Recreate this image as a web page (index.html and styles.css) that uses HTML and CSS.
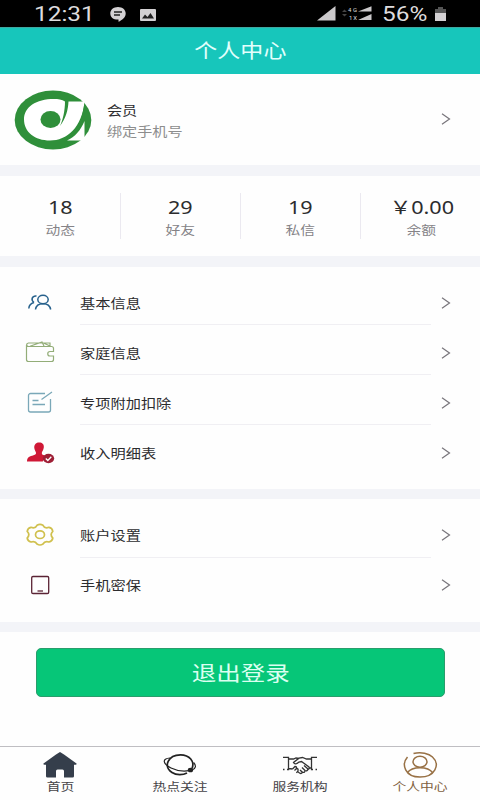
FILE: index.html
```html
<!DOCTYPE html>
<html lang="zh-CN">
<head>
<meta charset="utf-8">
<meta name="viewport" content="width=device-width">
<title>个人中心</title>
<link rel="stylesheet" href="styles.css">
</head>
<body>
<div class="app">
  <div class="status">
    <span class="clock wide">12:31</span>
    <svg class="chat" width="16" height="15" viewBox="0 0 16 15"><path d="M8 0c4.500 0 7.700 2.800 7.700 6.400 0 4-3.700 6.500-7.200 8.400v-2.200C3.500 12.900.3 10.100.3 6.400.3 2.800 3.500 0 8 0z" fill="#d3d1d3"/><path d="M4 5h8M4 8h6" stroke="#222" stroke-width="1.300"/></svg>
    <svg class="photo" width="16" height="12" viewBox="0 0 16 12"><rect width="16" height="12" rx="1" fill="#d3d1d3"/><path d="M2 9.500l3-4 2.500 2.500L10.500 4 14 9.500z" fill="#222"/></svg>
    <svg class="signal" width="56" height="15" viewBox="0 0 56 15"><path d="M0 14.500L18.500 0v14.500zM41 5.500L54.500.2v5.300zM41 14L54.500 8v6z" fill="#cbc9cb"/><path d="M25 6l2.500-2.500L30 6zM25 8l2.500 2.500L30 8z" fill="#444"/><text x="31" y="6" textLength="9">4G</text><text x="32" y="14" textLength="8">1X</text></svg>
    <span class="percent wide">56%</span>
    <svg class="battery" width="11" height="14" viewBox="0 0 11 14"><path d="M3 0h5v2h3v5H0V2h3z" fill="#555"/><path d="M0 6h11v8H0z" fill="#d3d1d3"/></svg>
  </div>
  <header class="title"><span class="wide">个人中心</span></header>

  <section class="profile">
    <svg class="avatar" width="78" height="60" viewBox="0 0 78 60"><ellipse cx="39" cy="30" rx="38.300" ry="29.500" fill="#2f8f3a"/><path d="M51 11.500C48 9.500 44 9 40 9 22 9 10 17 10 29.500S21 50.500 36 50.500c17 0 32-13 34.500-39H54.500C54 20 52 28 46 36 49 30 51 20 51 11.500z" fill="#fff"/><ellipse cx="36.500" cy="29.500" rx="10" ry="8.500" fill="#2f8f3a"/><path d="M70.500 31v19.500H53C61 47 67 40 70.500 31z" fill="#fff"/><path d="M70.500 12v17C67 38 61 45.500 53 49.500 63 41 69 28 70.500 12z" fill="#2f8f3a"/></svg>
    <div class="who">
      <span class="name"><span class="wide">会员</span></span>
      <span class="phone"><span class="wide">绑定手机号</span></span>
    </div>
    <svg class="arrow" width="10" height="12" viewBox="0 0 10 12"><path d="M1 .8L8.500 6 1 11.200"/></svg>
  </section>

  <section class="stats">
    <div class="stat"><b class="wide">18</b><span class="wide">动态</span></div>
    <div class="stat"><b class="wide">29</b><span class="wide">好友</span></div>
    <div class="stat"><b class="wide">19</b><span class="wide">私信</span></div>
    <div class="stat"><b class="wide">￥0.00</b><span class="wide">余额</span></div>
  </section>

  <section class="menu">
    <div class="row">
      <svg class="icon" width="30" height="26" viewBox="0 0 30 26" fill="none" stroke="#27618c" stroke-width="1.500"><ellipse cx="18" cy="9.500" rx="5.200" ry="4.300"/><path d="M10.500 19.500c.5-4 3.300-5.800 7.500-5.800s7 1.800 7.700 5.800M11.500 6C7 5.500 5.500 10 9 12.500M3.800 18.500c.2-3.500 1.700-5 5.200-6"/></svg>
      <div class="line"><span class="wide">基本信息</span><svg class="arrow" width="10" height="12" viewBox="0 0 10 12"><path d="M1 .8L8.500 6 1 11.200"/></svg></div>
    </div>
    <div class="row">
      <svg class="icon" width="30" height="26" viewBox="0 0 30 26" fill="none" stroke="#93ad78" stroke-width="1.200"><path d="M1.500 5v14.500a2 2 0 0 0 2 2h23a2 2 0 0 0 2-2v-3.500H25a2.200 2.200 0 0 1 0-4.500h3.500V8a2 2 0 0 0-2-1.500h-23C1 6.500 1 3.300 3.500 3H25v3M5 6.300L17 2l2 4M19 3.300l6 2.700"/></svg>
      <div class="line"><span class="wide">家庭信息</span><svg class="arrow" width="10" height="12" viewBox="0 0 10 12"><path d="M1 .8L8.500 6 1 11.200"/></svg></div>
    </div>
    <div class="row">
      <svg class="icon" width="30" height="26" viewBox="0 0 30 26" fill="none" stroke="#7aa8b8" stroke-width="1.300"><path d="M20 3.500H5.500a2 2 0 0 0-2 2v14.500a2 2 0 0 0 2 2h18a2 2 0 0 0 2-2V9M27 2L16.500 9.500M7.500 10.500h6M7.500 14.500H20"/></svg>
      <div class="line"><span class="wide">专项附加扣除</span><svg class="arrow" width="10" height="12" viewBox="0 0 10 12"><path d="M1 .8L8.500 6 1 11.200"/></svg></div>
    </div>
    <div class="row">
      <svg class="icon" width="30" height="26" viewBox="0 0 30 26"><path d="M14 2.500c3.500 0 5.200 2 4.800 5-.3 2.500-1.800 4-2 5.500 0 1.500 1 2 3 2.500l-2 6H2c0-5 3-5 6.500-6.300 2-.7 2.700-1.200 2.500-2.500C10.500 11 9.500 10 9.300 8 9 5 10.500 2.500 14 2.500z" fill="#cf1836"/><ellipse cx="23.500" cy="18.500" rx="5.700" ry="4.700" fill="#9e1f36"/><path d="M20.800 18.500l2 2 3.500-3.700" fill="none" stroke="#fff" stroke-width="1.300"/></svg>
      <div class="line"><span class="wide">收入明细表</span><svg class="arrow" width="10" height="12" viewBox="0 0 10 12"><path d="M1 .8L8.500 6 1 11.200"/></svg></div>
    </div>
  </section>

  <section class="menu short">
    <div class="row">
      <svg class="icon" width="30" height="26" viewBox="0 0 30 26" fill="none" stroke="#d0c04e" stroke-width="1.700"><path d="M12 3.300Q15 1.500 18 3.300C19.300 6 21 6.500 24 5.300Q27.300 6 27.800 9.300C25.500 11.500 25.500 13.500 27.800 16Q27.300 19.300 24 20C21 19 19.300 19.500 18 22Q15 24 12 22C10.700 19.500 9 19 6 20Q2.700 19.300 2.200 16C4.500 13.500 4.500 11.500 2.200 9.300Q2.700 6 6 5.300C9 6.500 10.700 6 12 3.300z"/><ellipse cx="15" cy="12.700" rx="4.500" ry="3.800"/></svg>
      <div class="line"><span class="wide">账户设置</span><svg class="arrow" width="10" height="12" viewBox="0 0 10 12"><path d="M1 .8L8.500 6 1 11.200"/></svg></div>
    </div>
    <div class="row">
      <svg class="icon" width="30" height="26" viewBox="0 0 30 26" fill="none"><rect x="6.700" y="4.500" width="17" height="17" rx="1.300" stroke="#5b2435" stroke-width="1.300"/><path d="M12.500 19h5.500" stroke="#5b2435" stroke-width="1.300"/></svg>
      <div class="line"><span class="wide">手机密保</span><svg class="arrow" width="10" height="12" viewBox="0 0 10 12"><path d="M1 .8L8.500 6 1 11.200"/></svg></div>
    </div>
  </section>

  <main class="action"><button class="logout"><span class="wide">退出登录</span></button></main>

  <nav class="tabs">
    <div class="tab">
      <svg width="36" height="28" viewBox="0 0 36 28"><path d="M18 1l4 2.500L34.500 12.500q.5 1.200-1 1.200H32v11.500q0 1.300-1.500 1.300H22V20q0-1.500-1.500-1.500h-5Q14 18.500 14 20v6.500H5.500Q4 26.500 4 25.200V13.700H2.500q-1.500 0-1-1.200L14 3.500z" fill="#353e4b"/></svg>
      <span class="wide">首页</span>
    </div>
    <div class="tab">
      <svg width="36" height="28" viewBox="0 0 36 28" fill="none" stroke="#222" stroke-width="1.700"><path d="M30 17.500C33 10.500 27.500 3.800 18.500 3.800 6 3.800 1 15.500 10 21.500c4.500 3 11 2.700 15 .5"/><path d="M8 7C-.5 7.500 1 13 9 17c6 3 12 3.500 18 2.700M31.500 11.500c3 3 2.500 6-1.500 7.500" stroke-width="1.200"/><ellipse cx="28.500" cy="19" rx="2.700" ry="2.300" fill="#222" stroke="none"/></svg>
      <span class="wide">热点关注</span>
    </div>
    <div class="tab">
      <svg width="36" height="28" viewBox="0 0 36 28" fill="none" stroke="#333" stroke-width="1.300"><path d="M1 6.300h5.500v12.200H5M1 18.500h1.500M35 6.300h-5.500v12.200H31M33.500 18.500H35M6.500 8h5l2.500-1 3 .5M6.500 17.500l4 .5M29.500 8h-5l-4-1.500-3.500.7-5.500 4.300q1.500 3 5.500-.5l2.500-.5 7.500 5.500q1 2-1.500 2.500M29.500 17h-3M22 14.500l4 3.500q-.5 2.500-3 1.500l-3-3M23 19.500q0 2.500-2.500 1.800L18 19M20.500 21.300q-1 2-3 .7L15 20M10.500 18l2.500-2.500q2 0 1.500 2l-2 2M14.500 17.500q2 0 1.500 2l-1.500 2.500"/></svg>
      <span class="wide">服务机构</span>
    </div>
    <div class="tab active">
      <svg width="36" height="28" viewBox="0 0 36 28" fill="none" stroke="#987145" stroke-width="1.500"><path d="M5.500 6C-1 13.500 3 26 18 26s20.500-12.500 12.500-20C27 2.500 19 .5 11.500 2.500"/><ellipse cx="18" cy="10.700" rx="7" ry="5.500"/><path d="M5.500 21.500C10 15 26 15 30.500 21.500"/></svg>
      <span class="wide">个人中心</span>
    </div>
  </nav>
</div>
</body>
</html>
```
FILE: styles.css
```css
* { box-sizing: border-box; }
body {
  margin: 0;
  font-family: "Noto Sans", "Noto Sans CJK SC", sans-serif;
  color: #2c2c2e;
  background: #f3f4f8;
}
.app { width: 480px; height: 800px; display: flex; flex-direction: column; overflow: hidden; }
.wide { display: inline-block; white-space: nowrap; transform: scaleX(1.2); }
svg { display: block; flex: none; }

.status {
  height: 27px; flex: none; background: #000; color: #dedcde;
  display: flex; align-items: center; padding-left: 34px;
  font: 20px/27px Roboto, sans-serif;
}
.status .wide { transform: scaleX(1.22); transform-origin: left; }
.clock { width: 76px; padding-top: 2px; }
.percent { width: 53px; padding-top: 2px; }
.chat { margin-top: 2px; }
.photo { margin: 2px 161px 0 14px; }
.signal { margin: 0 9px 0 0; }
.signal text { font: 6px Roboto, sans-serif; fill: #ddd; }

.title {
  height: 47px; flex: none; background: #17c6bb; color: #e2fffc;
  border-top: 1px solid #3fa8a0;
  display: flex; align-items: center; justify-content: center;
  font-size: 19.200px; line-height: 28px;
}

.profile {
  height: 91px; flex: none; background: #fefefe;
  display: flex; align-items: center; padding: 0 29px 0 14px;
}
.profile .arrow { margin-bottom: 1px; }
.who { flex: 1; margin-left: 15px; display: flex; flex-direction: column; font-size: 12.600px; line-height: 21px; }
.name { margin-top: 2px; }
.who .wide, .line .wide { transform-origin: left; }
.phone { color: #8d8d8d; }
.arrow { fill: none; stroke: #77747a; stroke-width: 1.200; }

.stats { height: 80px; flex: none; margin-top: 11px; background: #fefefe; display: flex; align-items: center; }
.stat {
  width: 120px; height: 46px; display: flex; flex-direction: column; align-items: center;
  border-right: 1px solid #ebe9f0;
}
.stat:first-child { width: 121px; }
.stat:last-child { width: 119px; border-right: 0; padding-left: 2px; }
.stat b { font-weight: 400; font-size: 18px; line-height: 28px; height: 28px; }
.stat span { font-size: 12.300px; line-height: 20px; color: #858387; }

.menu { flex: none; height: 222px; margin-top: 11px; padding: 8px 0 0 25px; background: #fefefe; }
.menu.short { height: 123px; margin-top: 10px; padding-top: 9px; }
.row { height: 50px; display: flex; align-items: center; }
.icon { margin-top: 6px; }
.short .icon { margin-top: 4px; }
.line {
  flex: 1; height: 50px; margin-left: 25px; padding-right: 29px; padding-top: 5px;
  display: flex; align-items: center; justify-content: space-between;
  font-size: 12.700px; line-height: 20px;
  background: linear-gradient(#f0eff3, #f0eff3) left bottom / 351px 1px no-repeat;
}
.short .line { padding-top: 4px; }
.row:last-child .line { background: none; }

.action { flex: 1; margin-top: 10px; padding: 16px 35px 0 36px; background: #fefefe; }
.logout {
  display: flex; align-items: center; justify-content: center;
  width: 100%; height: 49px; padding: 0; border: 1px solid #2a9d6c; border-radius: 5px;
  background: #06c678; color: #dbfff0; font: inherit; font-size: 20.400px; line-height: 30px;
}

.tabs { height: 54px; flex: none; background: #fefefe; border-top: 1px solid #bfbec2; display: flex; }
.tab { flex: 1; display: flex; flex-direction: column; align-items: center; padding-top: 4px; }
.tab .wide { font-size: 11.500px; line-height: 16px; color: #454347; }
.tab.active .wide { color: #806040; }
```
